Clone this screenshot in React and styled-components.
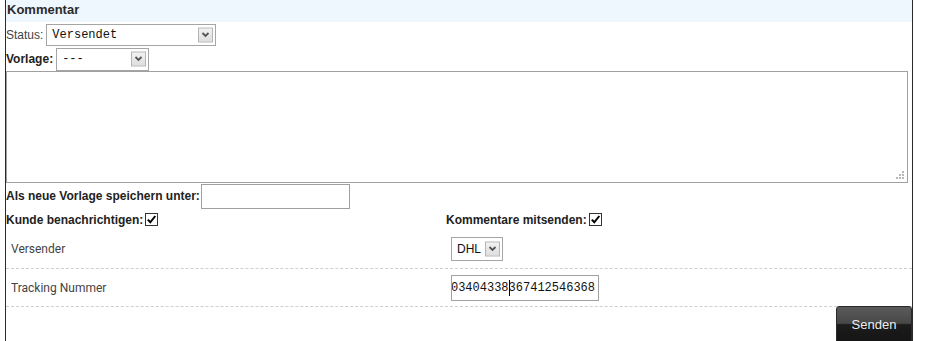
import styled, { createGlobalStyle } from "styled-components";

const GlobalStyle = createGlobalStyle`
  body {
    margin: 0;
    background: #fff;
    font-family: "Liberation Sans", Arial, sans-serif;
    font-size: 12px;
    color: #333;
  }
`;

const Panel = styled.div`
  margin-left: 5px;
  width: 906px;
  min-height: 341px;
  border-left: 1px solid #2a2a2a;
  border-right: 1px solid #2a2a2a;
  display: flex;
  flex-direction: column;
`;

const Header = styled.div`
  height: 22px;
  line-height: 20px;
  padding-left: 1px;
  background: #eef6fe;
  font-size: 13px;
  font-weight: bold;
  color: #2b2b2b;
`;

const FieldRow = styled.div`
  display: flex;
  align-items: center;
  gap: ${(p) => p.$gap ?? 3}px;
  height: ${(p) => p.$h || 23}px;
  margin-top: ${(p) => p.$mt || 0}px;
`;

const Label = styled.span`
  font-weight: ${(p) => (p.$bold ? "bold" : "normal")};
  color: ${(p) => (p.$bold ? "#222" : "#444")};
  white-space: nowrap;
`;

const SelectWrap = styled.div`
  position: relative;
  width: ${(p) => p.$w}px;
  height: ${(p) => p.$h || 22}px;
  box-sizing: border-box;
  border: 1px solid #a5a5a5;
  background: #fff;
`;

const NativeSelect = styled.select`
  appearance: none;
  width: 100%;
  height: 100%;
  border: 0;
  margin: 0;
  padding: 0 0 0 5px;
  background: transparent;
  font-family: ${(p) =>
    p.$sans ? '"Liberation Sans", Arial, sans-serif' : '"Liberation Mono", monospace'};
  font-size: 12px;
  color: #111;
  outline: none;
`;

const ArrowBox = styled.span`
  position: absolute;
  right: 2px;
  top: 50%;
  transform: translateY(-50%);
  width: 15px;
  height: 15px;
  box-sizing: border-box;
  border: 1px solid #b5b5b5;
  background: linear-gradient(#f2f2f2, #dedede);
  display: flex;
  align-items: center;
  justify-content: center;
  pointer-events: none;
`;

const AreaWrap = styled.div`
  position: relative;
  width: 902px;
  height: 112px;
`;

const TextArea = styled.textarea`
  display: block;
  width: 100%;
  height: 100%;
  box-sizing: border-box;
  margin: 0;
  border: 1px solid #a0a0a0;
  resize: none;
  font-family: "Liberation Sans", Arial, sans-serif;
`;

const Grip = styled.svg`
  position: absolute;
  right: 3px;
  bottom: 3px;
  pointer-events: none;
`;

const TextInput = styled.input`
  width: ${(p) => p.$w}px;
  height: 25px;
  box-sizing: border-box;
  border: 1px solid #a0a0a0;
  margin: 0;
  padding: 0 3px;
`;

const TwoCols = styled.div`
  display: grid;
  grid-template-columns: 440px 1fr;
  align-items: center;
  height: ${(p) => p.$h}px;
  border-bottom: ${(p) => (p.$dashed ? "1px dashed #cfcfcf" : "none")};
`;

const Inline = styled.div`
  display: flex;
  align-items: center;
  gap: 2px;
  padding-left: ${(p) => p.$pl || 0}px;
`;

const Check = styled.span`
  display: inline-flex;
  align-items: center;
  justify-content: center;
  width: 13px;
  height: 13px;
  box-sizing: border-box;
  border: 1px solid #333;
  background: #fff;
`;

const CellLabel = styled.span`
  padding-left: 5px;
  font-family: Roboto, "Liberation Sans", sans-serif;
  font-size: 12px;
  color: #444;
`;

const Tracking = styled.div`
  width: 148px;
  height: 26px;
  box-sizing: border-box;
  border: 1px solid #a0a0a0;
  overflow: hidden;
  display: flex;
  align-items: center;
  justify-content: flex-end;
  padding-right: 3px;
`;

const TrackingText = styled.span`
  white-space: nowrap;
  font-family: "Liberation Mono", monospace;
  font-size: 12px;
  color: #111;
`;

const Caret = styled.span`
  display: inline-block;
  width: 1px;
  height: 16px;
  margin: 0 -1px 0 0;
  background: #000;
  vertical-align: middle;
`;

const Footer = styled.div`
  display: flex;
  justify-content: flex-end;
  margin-top: -1px;
`;

const SendButton = styled.button`
  width: 76px;
  height: 36px;
  border: 1px solid #2a2a2a;
  border-radius: 3px 3px 0 0;
  background: linear-gradient(#5a5a5a 0%, #484848 48%, #1c1c1c 52%, #151515 100%);
  color: #eee;
  font-family: "Liberation Sans", Arial, sans-serif;
  font-size: 13px;
  padding: 0;
  cursor: pointer;
`;

const Chevron = () => (
  <svg width="9" height="7" viewBox="0 0 9 7">
    <path d="M1.5 1.5 L4.5 4.5 L7.5 1.5" fill="none" stroke="#555" strokeWidth="1.8" />
  </svg>
);

const Tick = () => (
  <svg width="11" height="11" viewBox="0 0 11 11">
    <path d="M1.8 5.6 L4.3 8.3 L9.3 2" fill="none" stroke="#000" strokeWidth="2" />
  </svg>
);

const Select = ({ w, h, value, sans }) => (
  <SelectWrap $w={w} $h={h}>
    <NativeSelect defaultValue={value} $sans={sans}>
      <option>{value}</option>
    </NativeSelect>
    <ArrowBox>
      <Chevron />
    </ArrowBox>
  </SelectWrap>
);

export default function App() {
  return (
    <>
      <GlobalStyle />
      <Panel>
        <Header>Kommentar</Header>
        <FieldRow $mt={1} $h={23}>
          <Label>Status:</Label>
          <Select w={170} value="Versendet" />
        </FieldRow>
        <FieldRow $mt={1} $h={24}>
          <Label $bold>Vorlage:</Label>
          <Select w={93} h={23} value="---" />
        </FieldRow>
        <AreaWrap>
          <TextArea />
          <Grip width="10" height="10" viewBox="0 0 10 10">
            <g fill="#b8b8b8">
              <rect x="7" y="1" width="2" height="2" />
              <rect x="4" y="4" width="2" height="2" />
              <rect x="7" y="4" width="2" height="2" />
              <rect x="1" y="7" width="2" height="2" />
              <rect x="4" y="7" width="2" height="2" />
              <rect x="7" y="7" width="2" height="2" />
            </g>
          </Grip>
        </AreaWrap>
        <FieldRow $h={26} $gap={1}>
          <Label $bold>Als neue Vorlage speichern unter:</Label>
          <TextInput $w={149} />
        </FieldRow>
        <TwoCols $h={21}>
          <Inline>
            <Label $bold>Kunde benachrichtigen:</Label>
            <Check>
              <Tick />
            </Check>
          </Inline>
          <Inline>
            <Label $bold>Kommentare mitsenden:</Label>
            <Check>
              <Tick />
            </Check>
          </Inline>
        </TwoCols>
        <TwoCols $h={38} $dashed>
          <CellLabel>Versender</CellLabel>
          <Inline $pl={5}>
            <Select w={52} h={24} value="DHL" sans />
          </Inline>
        </TwoCols>
        <TwoCols $h={37} $dashed>
          <CellLabel>Tracking Nummer</CellLabel>
          <Inline $pl={5}>
            <Tracking>
              <TrackingText>
                0003404338
                <Caret />
                367412546368
              </TrackingText>
            </Tracking>
          </Inline>
        </TwoCols>
        <Footer>
          <SendButton>Senden</SendButton>
        </Footer>
      </Panel>
    </>
  );
}
